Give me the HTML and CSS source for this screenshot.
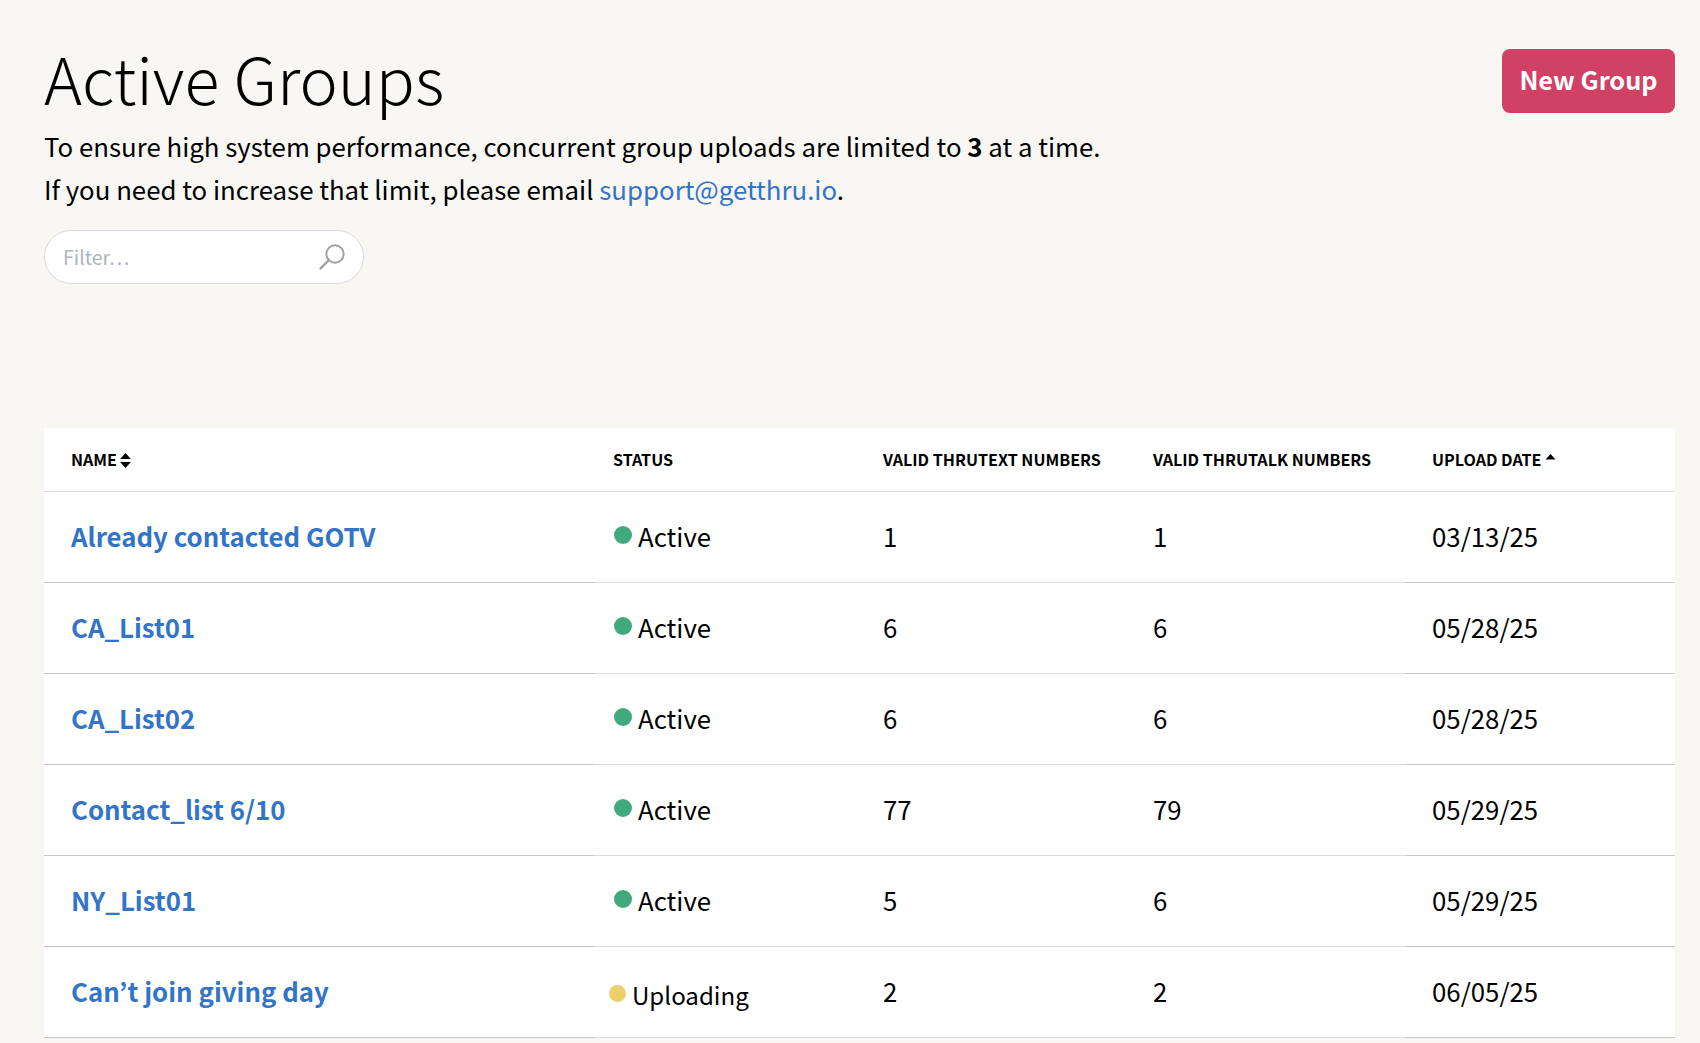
FILE: index.html
```html
<!DOCTYPE html>
<html lang="en">
<head>
<meta charset="utf-8">
<title>Active Groups</title>
<link rel="stylesheet" href="styles.css">
</head>
<body>
<main class="page">
  <header class="top">
    <div class="intro">
      <h1 class="title">Active Groups</h1>
      <p class="note">To ensure high system performance, concurrent group uploads are limited to <strong>3</strong> at a time.</p>
      <p class="note">If you need to increase that limit, please email <a class="mail" href="#">support@getthru.io</a>.</p>
      <label class="filter">
        <input class="filter-input" type="text" placeholder="Filter…">
        <svg class="filter-icon" viewBox="0 0 28 28" width="28" height="28" aria-hidden="true"><circle cx="17" cy="11" r="8.7" fill="none" stroke="#a0a0a0" stroke-width="2"/><path d="M10.8 17.2 2.5 25.5" fill="none" stroke="#a0a0a0" stroke-width="2.4" stroke-linecap="round"/></svg>
      </label>
    </div>
    <button class="new-group" type="button">New Group</button>
  </header>
  <table class="groups">
    <colgroup><col class="c1"><col class="c2"><col class="c3"><col class="c4"><col class="c5"></colgroup>
    <thead>
      <tr>
        <th>Name<svg class="sort" viewBox="0 0 10 14" width="11" height="15" aria-hidden="true"><path d="M5 0 10 5.6H0ZM5 14 0 8.4H10Z"/></svg></th>
        <th>Status</th>
        <th>Valid ThruText Numbers</th>
        <th>Valid ThruTalk Numbers</th>
        <th>Upload Date <svg class="sort up" viewBox="0 0 10 6" width="11" height="6" aria-hidden="true"><path d="M5 0 10 5.6H0Z"/></svg></th>
      </tr>
    </thead>
    <tbody>
      <tr><td><a class="name" href="#">Already contacted GOTV</a></td><td><span class="status"><i class="dot"></i>Active</span></td><td>1</td><td>1</td><td>03/13/25</td></tr>
      <tr><td><a class="name" href="#">CA_List01</a></td><td><span class="status"><i class="dot"></i>Active</span></td><td>6</td><td>6</td><td>05/28/25</td></tr>
      <tr><td><a class="name" href="#">CA_List02</a></td><td><span class="status"><i class="dot"></i>Active</span></td><td>6</td><td>6</td><td>05/28/25</td></tr>
      <tr><td><a class="name" href="#">Contact_list 6/10</a></td><td><span class="status"><i class="dot"></i>Active</span></td><td>77</td><td>79</td><td>05/29/25</td></tr>
      <tr><td><a class="name" href="#">NY_List01</a></td><td><span class="status"><i class="dot"></i>Active</span></td><td>5</td><td>6</td><td>05/29/25</td></tr>
      <tr><td><a class="name" href="#">Can’t join giving day</a></td><td><span class="status uploading"><i class="dot"></i>Uploading</span></td><td>2</td><td>2</td><td>06/05/25</td></tr>
    </tbody>
  </table>
</main>
</body>
</html>
```

FILE: styles.css
```css
* { box-sizing: border-box; }
html, body { margin: 0; height: 100%; overflow: hidden; }
body {
  background: #f8f7f4;
  color: #000;
  font-family: "Noto Sans CJK JP", "Noto Sans", sans-serif;
  font-size: 25.8px;
  line-height: 42px;
}
.page { padding: 30px 25px 0 44px; }
.top { display: flex; justify-content: space-between; align-items: flex-start; height: 398px; }
.title { margin: 0; font-size: 64.6px; font-weight: 300; line-height: 95px; }
.note { margin: 0; }
.note + .note { margin-top: 1px; }
.note strong { font-weight: 700; }
.mail { color: #3274c6; text-decoration: none; }
.filter { position: relative; display: block; width: 320px; margin-top: 20px; }
.filter-input {
  display: block; width: 100%; height: 54px; padding: 0 60px 2px 18px;
  border: 1px solid #d9d9d9; border-radius: 27px; background: #fff; outline: none;
  font: 19.5px/1.4 "Noto Sans CJK JP", "Noto Sans", sans-serif;
}
.filter-input::placeholder { color: #aeb4bd; opacity: 1; }
.filter-icon { position: absolute; right: 18px; top: 13px; }
.new-group {
  width: 173px; height: 64px; margin-top: 19px; padding: 0 0 3px;
  border: 0; border-radius: 8px; background: #d04165; color: #fff;
  font: 700 25.3px/1 "Noto Sans CJK JP", "Noto Sans", sans-serif;
}
.groups { width: 100%; table-layout: fixed; border-collapse: collapse; background: #fff; }
.c1 { width: 551px; }
.c2 { width: 270px; }
.c3 { width: 270px; }
.c4 { width: 270px; }
.groups th, .groups td { padding: 0 0 0 18px; text-align: left; border-bottom: 1px solid #dcdcdc; }
.groups th:first-child, .groups td:first-child { padding-left: 27px; }
.groups th:last-child, .groups td:last-child { padding-left: 27px; }
.groups td { padding-bottom: 2px; }
.groups td:first-child, .groups td:last-child { border-bottom-color: #c8c8c8; }
.groups th {
  height: 63px; font-size: 16.1px; font-weight: 700; line-height: 20px;
  text-transform: uppercase; white-space: nowrap;
}
.groups td { height: 91px; }
.name { color: #3274c6; font-weight: 700; text-decoration: none; }
.sort { fill: #000; margin-left: 3px; vertical-align: -2px; }
.sort.up { margin-left: 0; vertical-align: 6px; }
.status { display: inline-flex; align-items: center; margin-left: 1px; transform: translateY(-1px); }
.dot { width: 18px; height: 18px; margin-right: 6px; border-radius: 50%; background: #41a97e; transform: translateY(-1px); }
.uploading { margin-left: -4px; font-size: 24.1px; transform: translateY(3px); }
.uploading .dot { width: 17px; height: 17px; margin-right: 6px; background: #eccf6b; }
```
